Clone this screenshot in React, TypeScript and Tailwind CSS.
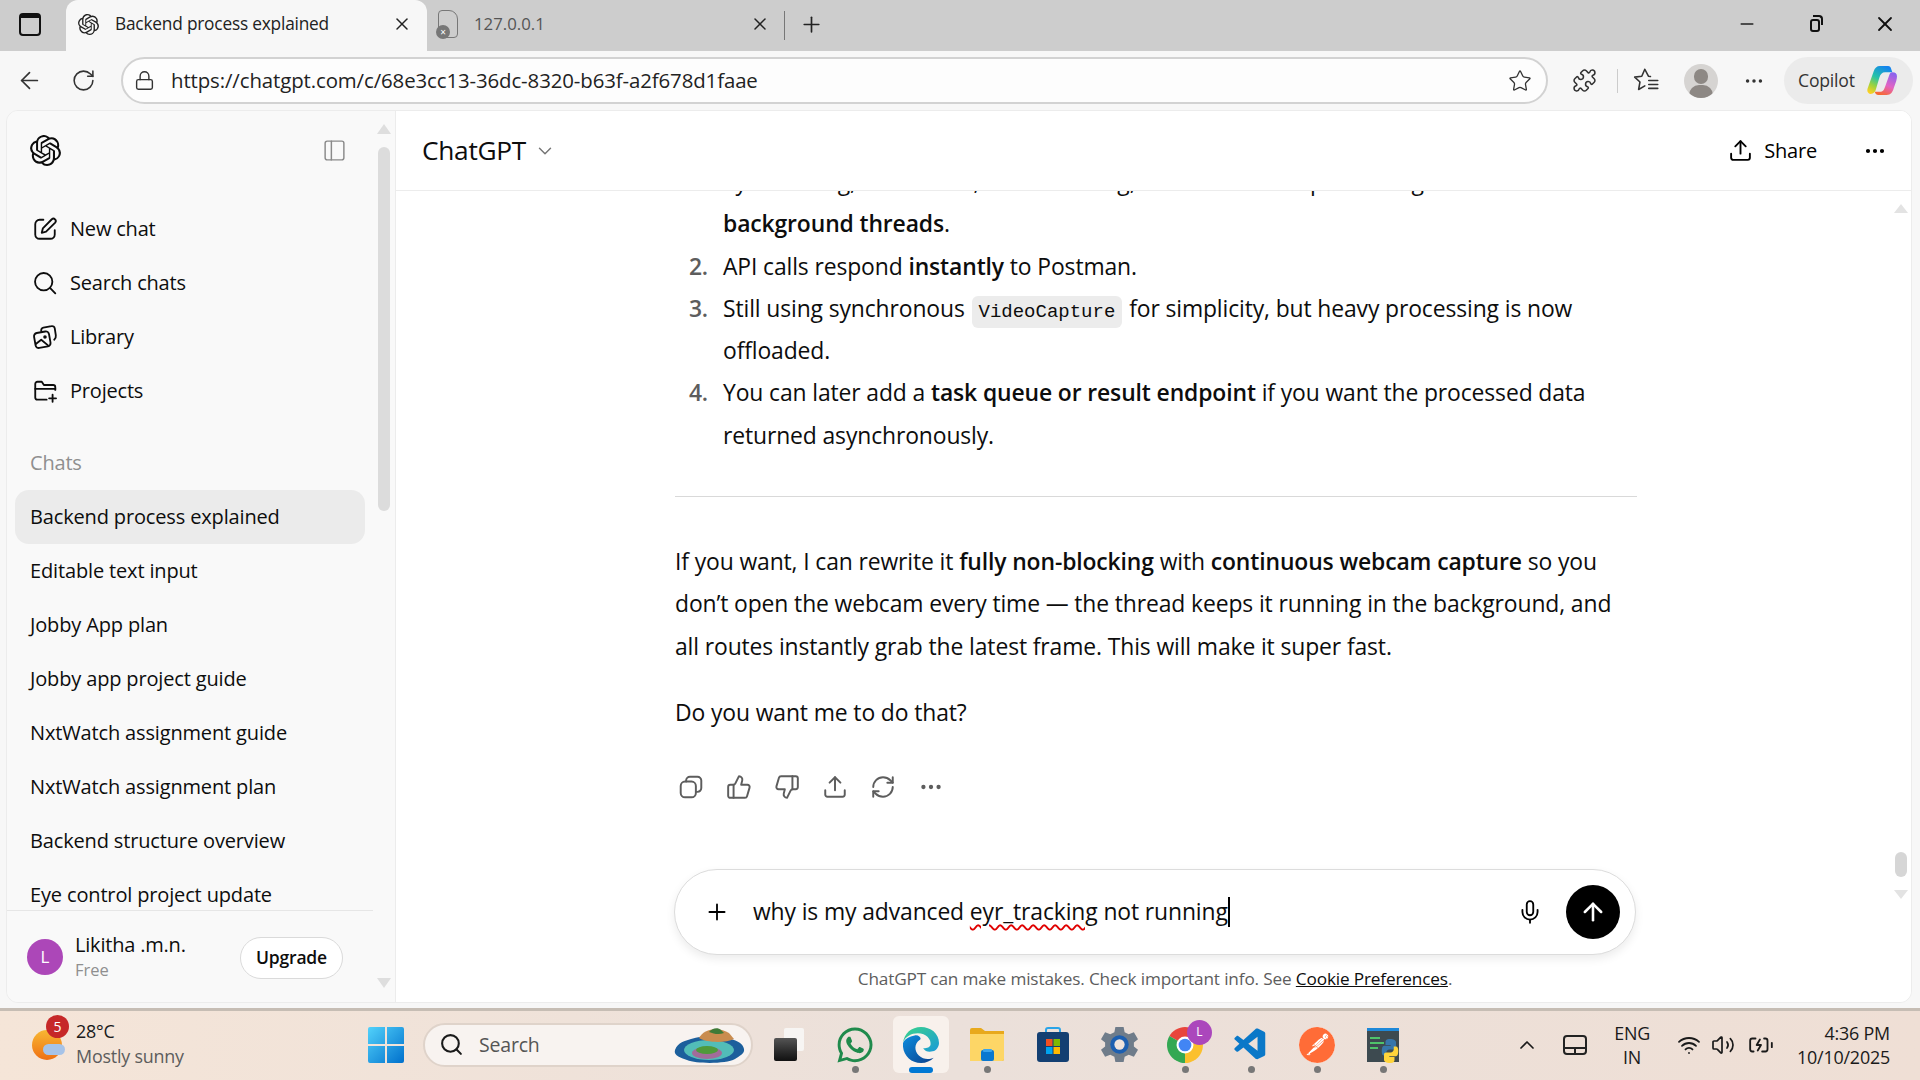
import type { ReactNode } from 'react';
import {
  ArrowLeft, ArrowUp, BatteryCharging, ChevronDown, ChevronUp, Ellipsis, Lock, Mic, Minus,
  PanelLeft, Plus, Puzzle, RefreshCw, RotateCw, Search, Star, ThumbsDown, ThumbsUp, Upload, Volume2, Wifi, X,
} from 'lucide-react';
import { SiOpenai, SiPostman } from 'react-icons/si';
import { FaWhatsapp } from 'react-icons/fa';
import { VscVscode } from 'react-icons/vsc';

const sideChats = [
  'Backend process explained',
  'Editable text input',
  'Jobby App plan',
  'Jobby app project guide',
  'NxtWatch assignment guide',
  'NxtWatch assignment plan',
  'Backend structure overview',
  'Eye control project update',
];

const NavSvg = ({ children }: { children: ReactNode }) => (
  <svg width="26" height="26" viewBox="0 0 24 24" fill="none" stroke="currentColor" strokeWidth="1.7" strokeLinecap="round" strokeLinejoin="round">
    {children}
  </svg>
);

const navItems = [
  {
    label: 'New chat',
    icon: (
      <NavSvg>
        <path d="M10.500 3.500H7a4 4 0 0 0-4 4V17a4 4 0 0 0 4 4h10a4 4 0 0 0 4-4v-4" />
        <path d="M18.300 3a2.200 2.200 0 0 1 3.100 3.100L13 14.500l-4 1 1-4z" />
      </NavSvg>
    ),
  },
  {
    label: 'Search chats',
    icon: (
      <NavSvg>
        <circle cx="10.800" cy="10.800" r="8" />
        <path d="M16.800 16.800l4.700 4.700" />
      </NavSvg>
    ),
  },
  {
    label: 'Library',
    icon: (
      <NavSvg>
        <path d="M8.500 6.500V5.800a2.500 2.500 0 0 1 2-2.400L18 2a2.500 2.500 0 0 1 3 2l1 6.500c.2 1.500-.3 3-1.500 4" />
        <rect x="2.500" y="7.500" width="14" height="14" rx="3" transform="rotate(-10 9.500 14.500)" />
        <path d="M3.500 18.500l5-4 6 5" />
        <circle cx="12" cy="12" r=".8" />
      </NavSvg>
    ),
  },
  {
    label: 'Projects',
    icon: (
      <NavSvg>
        <path d="M21.500 11V8.500a2 2 0 0 0-2-2H11L9 3.500H5a2 2 0 0 0-2 2V18a2 2 0 0 0 2 2h8.500" />
        <path d="M3 10h18.500" />
        <path d="M19 15.500v6.500M15.800 18.800h6.400" />
      </NavSvg>
    ),
  },
];

const TabBar = () => (
  <div className="h-[51px] bg-[#cdcdcd] flex items-end shrink-0 text-[#222]">
    <div className="w-[66px] h-full flex items-center pl-[19px] pb-[3px]">
      <div className="w-[22px] h-[23px] border-2 border-[#111] rounded-[4px] border-t-[5px]" />
    </div>
    <div className="w-[361px] h-[51px] bg-[#f7f7f7] rounded-t-[12px] flex items-center pl-[12px] pr-[15px] pb-[3px]">
      <SiOpenai size={21} className="text-[#222]" />
      <span className="ml-[16px] text-[17.300px] tracking-[-0.2px] flex-1">Backend process explained</span>
      <X size={20} strokeWidth={1.8} />
    </div>
    <div className="w-[357px] h-full flex items-center pl-[11px] pr-[14px] pb-[3px]">
      <div className="relative w-[20px] h-[28px] border-[1.5px] border-[#777] rounded-[4px] rounded-tr-[9px]">
        <div className="absolute -left-[3px] bottom-[-2px] w-[14px] h-[14px] rounded-full bg-[#777] text-white text-[10px] leading-[14px] text-center">×</div>
      </div>
      <span className="ml-[16px] text-[16.800px] text-[#555] flex-1">127.0.0.1</span>
      <X size={20} strokeWidth={1.8} />
    </div>
    <div className="w-px h-[29px] bg-[#777] mb-[11px]" />
    <div className="h-full flex items-center ml-[14px] pb-[3px]"><Plus size={25} strokeWidth={1.6} /></div>
    <div className="flex-1" />
    <div className="h-full flex items-center pr-[23px] gap-[48px] pb-[3px]">
      <Minus size={20} strokeWidth={1.8} />
      <div className="relative w-[20px] h-[20px] flex items-center justify-center">
        <div className="w-[10px] h-[13px] border-2 border-[#111] rounded-[3px] mt-[3px]" />
        <div className="absolute top-[1px] right-[2px] w-[10px] h-[10px] border-t-2 border-r-2 border-[#111] rounded-tr-[4px]" />
      </div>
      <X size={24} strokeWidth={1.8} className="text-[#111]" />
    </div>
  </div>
);

const CopilotLogo = () => (
  <svg width="33" height="31" viewBox="0 0 31 30">
    <defs>
      <linearGradient id="cpa" x1="0.7" y1="0" x2="0.2" y2="1">
        <stop offset="0" stopColor="#1484ee" /><stop offset="0.45" stopColor="#24c3a8" /><stop offset="0.75" stopColor="#9ed23c" /><stop offset="1" stopColor="#fbd022" />
      </linearGradient>
      <linearGradient id="cpb" x1="0.7" y1="0" x2="0.3" y2="1">
        <stop offset="0" stopColor="#8a63ee" /><stop offset="0.55" stopColor="#e263c4" /><stop offset="1" stopColor="#f8692f" />
      </linearGradient>
    </defs>
    <path d="M13 1h8c1.500 0 2.500 1 3 3l1 3h-7c-3 0-4.500 2-5.500 5L9 24c-.5 2-2 4-5 4-3-.5-3.500-3-3-5L7 6c1-3 3-5 6-5z" fill="url(#cpa)" />
    <path d="M25 7c3 0 4.500 1 4.500 4s-1 6-3 11c-1 4-3 7-7 7h-8c-2 0-3-1-3.500-3h5c3 0 4-2 5-5L22 10c.5-2 1.500-3 3-3z" fill="url(#cpb)" />
  </svg>
);

const FavoritesIcon = () => (
  <svg width="27" height="27" viewBox="0 0 24 24" fill="none" stroke="currentColor" strokeWidth="1.400" strokeLinejoin="round" strokeLinecap="round">
    <path d="M15.500 8.500l-1.800-.3L10.500 2 7.800 8.200 1.500 9l4.700 4.300L5 20l5.500-3.200" />
    <path d="M14 12h8M14 15.500h8M14 19h8" />
  </svg>
);

const CopyIcon = () => (
  <svg width="26" height="26" viewBox="0 0 24 24" fill="none" stroke="currentColor" strokeWidth="1.800" strokeLinejoin="round" strokeLinecap="round">
    <rect x="2.500" y="7" width="14" height="14.500" rx="4" />
    <path d="M7.500 7V6A3.500 3.500 0 0 1 11 2.500h7A3.500 3.500 0 0 1 21.500 6v7a3.500 3.500 0 0 1-3.500 3.500h-1.500" />
  </svg>
);

const Toolbar = () => (
  <div className="h-[59px] bg-[#f7f7f7] flex items-center shrink-0 text-[#333]">
    <div className="w-[121px] flex items-center pl-[16px] gap-[28px]">
      <ArrowLeft size={27} strokeWidth={1.5} />
      <RotateCw size={25} strokeWidth={1.5} />
    </div>
    <div className="w-[1427px] h-[47px] rounded-full border-2 border-[#d2d2d2] bg-[#fdfdfd] flex items-center pl-[11px] pr-[14px]">
      <Lock size={21} strokeWidth={1.6} />
      <span className="ml-[16px] text-[20.400px] tracking-[-0.1px] text-[#222] flex-1">https://chatgpt.com/c/68e3cc13-36dc-8320-b63f-a2f678d1faae</span>
      <Star size={24} strokeWidth={1.3} />
    </div>
    <div className="flex items-center ml-[24px]">
      <Puzzle size={25} strokeWidth={1.5} />
      <div className="w-px h-[24px] bg-[#ccc] ml-[20px]" />
      <span className="ml-[15px]"><FavoritesIcon /></span>
      <div className="relative ml-[24px] w-[34px] h-[34px] rounded-full bg-[#d6d4d2] overflow-hidden">
        <div className="absolute left-[10px] top-[5px] w-[14px] h-[15px] rounded-full bg-[#8d8884]" />
        <div className="absolute left-[5px] top-[21px] w-[24px] h-[20px] rounded-full bg-[#8d8884]" />
      </div>
      <Ellipsis size={22} strokeWidth={1.8} className="ml-[25px]" />
    </div>
    <div className="ml-[19px] w-[129px] h-[47px] rounded-full bg-[#ebebeb] flex items-center pl-[14px] gap-[11px]">
      <span className="text-[17.600px] tracking-[-0.2px] text-[#333]">Copilot</span>
      <CopilotLogo />
    </div>
  </div>
);

const Sidebar = () => (
  <aside className="w-[389px] shrink-0 flex bg-[#f9f9f9] border-r border-[#ececec] text-[#0d0d0d]">
    <div className="w-[366px] flex flex-col">
      <div className="h-[78px] flex items-center justify-between pl-[23px] pr-[26px] shrink-0">
        <SiOpenai size={31} />
        <PanelLeft size={25} strokeWidth={1.4} className="text-[#8a8a8a]" />
      </div>
      <div className="flex-1 overflow-hidden">
        <div className="pt-[13px]">
          {navItems.map((item) => (
            <div key={item.label} className="h-[54px] flex items-center pl-[25px] gap-[12px] text-[20px] tracking-[-0.2px]">
              {item.icon}
              <span>{item.label}</span>
            </div>
          ))}
        </div>
        <div className="h-[54px] mt-[18px] flex items-center pl-[23px] text-[20px] tracking-[-0.2px] text-[#8f8f8f]">Chats</div>
        <div className="px-[8px]">
          {sideChats.map((chat, i) => (
            <div
              key={chat}
              className={`h-[54px] rounded-[14px] flex items-center pl-[15px] text-[20px] tracking-[-0.15px] whitespace-nowrap ${i === 0 ? 'bg-[#ebebeb]' : ''}`}
            >
              {chat}
            </div>
          ))}
        </div>
      </div>
      <div className="h-[92px] border-t border-[#e6e6e6] shrink-0 flex items-center pl-[20px] pr-[30px]">
        <div className="w-[36px] h-[36px] rounded-full bg-[#ac47b8] text-white flex items-center justify-center text-[17px]">L</div>
        <div className="ml-[12px] flex-1">
          <div className="text-[20px] leading-[26px] tracking-[-0.2px]">Likitha .m.n.</div>
          <div className="text-[16.500px] leading-[24px] text-[#8f8f8f]">Free</div>
        </div>
        <div className="w-[103px] h-[42px] mt-[2px] rounded-full border border-[#dadada] bg-white flex items-center justify-center text-[17.500px] font-semibold tracking-[-0.2px]">Upgrade</div>
      </div>
    </div>
    <div className="flex-1 flex flex-col items-center relative pt-[13px] pb-[14px]">
      <div className="w-0 h-0 border-x-[7px] border-x-transparent border-b-[10px] border-b-[#dedede]" />
      <div className="w-[12px] h-[364px] mt-[13px] rounded-full bg-[#dcdcdc]" />
      <div className="flex-1" />
      <div className="w-0 h-0 border-x-[7px] border-x-transparent border-t-[10px] border-t-[#dedede]" />
    </div>
  </aside>
);

const Li = ({ n, children }: { n: number; children: ReactNode }) => (
  <li className="flex">
    <span className="w-[33px] text-right font-semibold text-[#5d5d5d] mr-[15px] shrink-0">{n}.</span>
    <div>{children}</div>
  </li>
);

const Chat = () => (
  <div className="flex-1 overflow-hidden">
    <div className="w-[962px] ml-[279px] mt-[-30px] text-[22.900px] leading-[42.300px] tracking-[-0.12px] text-[#0d0d0d]">
      <ol>
        <Li n={1}>
          Eye tracking, calibration, hand tracking, and screenshot processing all run in <b className="font-semibold">background threads</b>.
        </Li>
        <Li n={2}>API calls respond <b className="font-semibold">instantly</b> to Postman.</Li>
        <Li n={3}>
          Still using synchronous{' '}
          <code className="font-['Liberation_Mono',monospace] text-[19px] leading-none tracking-normal bg-[#ececec] rounded-[6px] px-[7px] py-[5px] mx-[1px]">VideoCapture</code>{' '}
          for simplicity, but heavy processing is now offloaded.
        </Li>
        <Li n={4}>
          You can later add a <b className="font-semibold">task queue or result endpoint</b> if you want the processed data returned asynchronously.
        </Li>
      </ol>
      <hr className="mt-[39px] mb-[44px] border-[#d9d9d9]" />
      <p>
        If you want, I can rewrite it <b className="font-semibold">fully non-blocking</b> with <b className="font-semibold">continuous webcam capture</b> so you don’t open the webcam every time — the thread keeps it running in the background, and all routes instantly grab the latest frame. This will make it super fast.
      </p>
      <p className="mt-[24px]">Do you want me to do that?</p>
      <div className="flex items-center gap-[22px] mt-[40px] ml-[3px] text-[#5d5d5d]">
        <CopyIcon />
        <ThumbsUp size={26} strokeWidth={1.8} />
        <ThumbsDown size={26} strokeWidth={1.8} />
        <Upload size={26} strokeWidth={1.8} />
        <RefreshCw size={26} strokeWidth={1.8} />
        <Ellipsis size={26} strokeWidth={2} />
      </div>
    </div>
  </div>
);

const Composer = () => (
  <div className="shrink-0 pl-[278px] pr-[275px]">
    <div className="h-[86px] rounded-[43px] border border-[#dcdcdc] bg-white shadow-[0_4px_10px_rgba(0,0,0,0.08)] flex items-center pl-[29px] pr-[15px]">
      <Plus size={26} strokeWidth={1.7} />
      <span className="ml-[23px] text-[22.900px] tracking-[-0.12px] text-[#0d0d0d] flex items-center">
        why is my advanced&nbsp;
        <span className="underline decoration-wavy decoration-[#e00000] decoration-[1.5px] underline-offset-[4px]">eyr_tracking</span>
        &nbsp;not running
        <span className="inline-block w-[2px] h-[30px] bg-black" />
      </span>
      <div className="flex-1" />
      <Mic size={26} strokeWidth={1.7} />
      <div className="ml-[23px] w-[54px] h-[54px] rounded-full bg-black text-white flex items-center justify-center">
        <ArrowUp size={28} strokeWidth={2.2} />
      </div>
    </div>
    <div className="h-[47px] flex items-center justify-center text-[17.200px] tracking-[-0.15px] text-[#5d5d5d]">
      ChatGPT can make mistakes. Check important info. See&nbsp;<span className="underline text-[#0d0d0d]">Cookie Preferences</span>.
    </div>
  </div>
);

const Main = () => (
  <main className="flex-1 flex flex-col bg-white min-w-0 relative">
    <header className="h-[80px] shrink-0 border-b border-[#ececec] flex items-center pl-[26px] pr-[24px] relative z-10 bg-white">
      <span className="text-[26.300px] tracking-[-0.3px] text-[#0d0d0d]">ChatGPT</span>
      <ChevronDown size={22} strokeWidth={1.6} className="ml-[8px] text-[#777]" />
      <div className="flex-1" />
      <Upload size={25} strokeWidth={1.8} />
      <span className="ml-[11px] text-[20px] font-medium tracking-[-0.2px]">Share</span>
      <Ellipsis size={24} strokeWidth={2.2} className="ml-[46px]" />
    </header>
    <Chat />
    <Composer />
    {/* scrollbar over the chat */}
    <div className="absolute right-[3px] top-[93px] w-0 h-0 border-x-[7px] border-x-transparent border-b-[9px] border-b-[#e3e3e3]" />
    <div className="absolute right-[4px] top-[741px] w-[12px] h-[25px] rounded-full bg-[#d6d6d6]" />
    <div className="absolute right-[3px] top-[779px] w-0 h-0 border-x-[7px] border-x-transparent border-t-[9px] border-t-[#e3e3e3]" />
  </main>
);

const TaskIcon = ({ children, dot, active }: { children: ReactNode; dot?: boolean; active?: boolean }) => (
  <div className="relative w-[66px] h-[57px] flex items-center justify-center">
    {active && <div className="absolute left-[5px] right-[5px] inset-y-0 rounded-[6px] bg-[#f8f1ec]" />}
    <div className="relative">{children}</div>
    {dot && <div className="absolute bottom-[0px] w-[7px] h-[7px] rounded-full bg-[#777]" />}
    {active && <div className="absolute bottom-[0px] w-[24px] h-[6px] rounded-full bg-[#0078d4]" />}
  </div>
);

const WindowsLogo = () => (
  <svg width="36" height="36" viewBox="0 0 36 36">
    <defs>
      <linearGradient id="win" x1="0" y1="0" x2="1" y2="1"><stop offset="0" stopColor="#52d2fb" /><stop offset="1" stopColor="#0070cc" /></linearGradient>
    </defs>
    <path d="M2 0h15v17H0V2a2 2 0 0 1 2-2zM19 0h15a2 2 0 0 1 2 2v15H19zM0 19h17v17H2a2 2 0 0 1-2-2zM19 19h17v15a2 2 0 0 1-2 2H19z" fill="url(#win)" />
  </svg>
);

const Island = () => (
  <svg width="72" height="38" viewBox="0 0 72 38">
    <path d="M2 24c3-8 10-9 16-11 12-4 30-4 40 0 6 2 12 4 13 10 1 5-5 7-9 10-9 5-38 5-48 1-5-2-14-4-12-10z" fill="#1c5f9c" />
    <ellipse cx="36" cy="24" rx="25" ry="10" fill="#52bdb8" />
    <ellipse cx="34" cy="27" rx="15" ry="6" fill="#a26c9a" />
    <ellipse cx="34" cy="24" rx="11" ry="4" fill="#4f9a3a" />
    <path d="M26 12c4-9 20-12 30-5l5 6c-8 4-27 4-35-1z" fill="#c98c4f" />
    <path d="M36 6c3-4 9-5 12-2l3 3c-5 2-10 1-15-1z" fill="#3e7a37" />
  </svg>
);

const EdgeLogo = () => (
  <svg width="36" height="36" viewBox="0 0 34 34">
    <defs>
      <linearGradient id="edgeA" x1="0" y1="0" x2="1" y2="1"><stop offset="0" stopColor="#3bd48a" /><stop offset="1" stopColor="#1a9ad8" /></linearGradient>
      <linearGradient id="edgeB" x1="0" y1="0" x2="1" y2="1"><stop offset="0" stopColor="#0c8ee0" /><stop offset="1" stopColor="#0a3f8c" /></linearGradient>
    </defs>
    <path d="M17 0C8 0 1 6 0 15c2-6 8-9 14-9 8 0 13 6 12 11-1 3-5 3-7 3 2 3 5 4 9 3 4-1 6-5 6-8C34 6 26 0 17 0z" fill="url(#edgeA)" />
    <path d="M0 15c-1 11 7 19 17 19 5 0 9-2 12-5-4 2-10 2-14-2-5-5-4-12 1-15 2-1-1-5-5-4C6 9 2 11 0 15z" fill="url(#edgeB)" />
  </svg>
);

const FolderIcon = () => (
  <svg width="36" height="33" viewBox="0 0 34 33">
    <path d="M0 2a2 2 0 0 1 2-2h9l4 3h19v28a2 2 0 0 1-2 2H0z" fill="#e8a91c" />
    <path d="M0 6h34v25a2 2 0 0 1-2 2H0z" fill="#fdd666" />
    <rect x="11" y="22" width="13" height="11" rx="2" fill="#0a78d0" />
    <rect x="13" y="21" width="9" height="3" rx="1" fill="#3ba4ec" />
  </svg>
);

const StoreIcon = () => (
  <svg width="34" height="36" viewBox="0 0 34 36">
    <path d="M10 6V3a2 2 0 0 1 2-2h10a2 2 0 0 1 2 2v3" fill="none" stroke="#2aa4e8" strokeWidth="2" />
    <rect x="1" y="5" width="32" height="30" rx="3" fill="#133f72" />
    <rect x="10" y="12" width="6.500" height="7" fill="#f25022" />
    <rect x="17.500" y="12" width="6.500" height="7" fill="#7fba00" />
    <rect x="10" y="20" width="6.500" height="7" fill="#00a4ef" />
    <rect x="17.500" y="20" width="6.500" height="7" fill="#ffb900" />
  </svg>
);

const GearIcon = () => (
  <svg width="37" height="37" viewBox="0 0 36 36">
    <path d="M14 1h8l1 5 4 2 5-2 4 7-4 3v4l4 3-4 7-5-2-4 2-1 5h-8l-1-5-4-2-5 2-4-7 4-3v-4L0 13l4-7 5 2 4-2z" fill="#6f7c8a" />
    <circle cx="18" cy="18" r="9" fill="#1d5fb0" />
    <circle cx="18" cy="18" r="5" fill="#efe3dc" />
  </svg>
);

const ChromeIcon = () => (
  <div className="relative">
    <svg width="36" height="36" viewBox="0 0 34 34">
      <path d="M17 17L2.300 8.500A17 17 0 0 1 31.700 8.500z" fill="#e8453c" />
      <path d="M17 17L31.700 8.500A17 17 0 0 1 17 34z" fill="#fbc02d" />
      <path d="M17 17L17 34A17 17 0 0 1 2.300 8.500z" fill="#34a853" />
      <circle cx="17" cy="17" r="8" fill="#fff" />
      <circle cx="17" cy="17" r="6" fill="#4285f4" />
    </svg>
    <div className="absolute -right-[9px] -top-[7px] w-[25px] h-[25px] rounded-full bg-[#ab47bc] text-white text-[12px] flex items-center justify-center">L</div>
  </div>
);

const PythonIcon = () => (
  <div className="relative w-[32px] h-[34px] bg-[#3d4a50] border-t-[3px] border-[#1e88d8]">
    <div className="mt-[6px] ml-[3px] w-[10px] h-[2px] bg-[#4fc36a]" />
    <div className="mt-[3px] ml-[3px] w-[14px] h-[2px] bg-[#4fc36a]" />
    <div className="mt-[3px] ml-[3px] w-[8px] h-[2px] bg-[#4fc36a]" />
    <svg className="absolute -right-[1px] top-[8px]" width="20" height="24" viewBox="0 0 22 32">
      <path d="M11 0c-5 0-6 2-6 4v4h7v1H3c-2 0-3 3-3 7s1 6 3 6h3v-4c0-2 2-4 4-4h6c2 0 3-1 3-3V4c0-2-3-4-8-4z" fill="#3776ab" />
      <path d="M11 32c5 0 6-2 6-4v-4h-7v-1h9c2 0 3-3 3-7s-1-6-3-6h-3v4c0 2-2 4-4 4H6c-2 0-3 1-3 3v7c0 2 3 4 8 4z" fill="#ffd43b" />
    </svg>
  </div>
);

const Taskbar = () => (
  <footer className="h-[72px] shrink-0 border-t-[3px] border-[#c6bdb4] pb-[2px] bg-gradient-to-r from-[#f5e5d8] via-[#ebe0da] to-[#efdfd5] flex items-center text-[#1a1a1a]">
    <div className="w-[368px] flex items-center pl-[32px] shrink-0">
      <div className="relative w-[34px] h-[36px]">
        <div className="absolute left-0 top-[3px] w-[30px] h-[30px] rounded-full bg-gradient-to-b from-[#f7b733] to-[#ee6f12]" />
        <div className="absolute left-[11px] top-[17px] w-[22px] h-[11px] rounded-full bg-[#a6c3e8]" />
        <div className="absolute left-[14px] -top-[12px] w-[23px] h-[23px] rounded-full bg-[#c62828] text-white text-[14px] flex items-center justify-center">5</div>
      </div>
      <div className="ml-[10px] -mt-[3px]">
        <div className="text-[17.900px] leading-[25px] tracking-[-0.2px]">28°C</div>
        <div className="text-[17.900px] leading-[24px] tracking-[-0.2px] text-[#5c5c5c]">Mostly sunny</div>
      </div>
    </div>
    <WindowsLogo />
    <div className="ml-[19px] w-[330px] h-[44px] rounded-full bg-[#f8f3f0] border-2 border-[#dfd3ca] flex items-center pl-[14px] pr-[6px]">
      <Search size={25} strokeWidth={2} />
      <span className="ml-[15px] text-[19.500px] tracking-[-0.2px] text-[#555] flex-1">Search</span>
      <Island />
    </div>
    <div className="flex items-center ml-[3px]">
      <TaskIcon>
        <div className="relative w-[30px] h-[33px]">
          <div className="absolute right-0 top-0 w-[20px] h-[23px] rounded-[2px] bg-[#f7f5f3]" />
          <div className="absolute left-0 bottom-0 w-[23px] h-[23px] rounded-[2px] bg-gradient-to-b from-[#555] to-[#111]" />
        </div>
      </TaskIcon>
      <TaskIcon dot><FaWhatsapp size={40} className="text-[#1f8a4c]" /></TaskIcon>
      <TaskIcon active><EdgeLogo /></TaskIcon>
      <TaskIcon dot><FolderIcon /></TaskIcon>
      <TaskIcon><StoreIcon /></TaskIcon>
      <TaskIcon><GearIcon /></TaskIcon>
      <TaskIcon dot><ChromeIcon /></TaskIcon>
      <TaskIcon dot><VscVscode size={38} className="text-[#0a78c8]" /></TaskIcon>
      <TaskIcon dot>
        <div className="w-[36px] h-[36px] rounded-full bg-[#ff6c37] flex items-center justify-center">
          <SiPostman size={36} className="text-[#ff6c37] bg-white rounded-full" />
        </div>
      </TaskIcon>
      <TaskIcon dot><PythonIcon /></TaskIcon>
    </div>
    <div className="flex-1" />
    <div className="flex items-center pr-[30px]">
      <ChevronUp size={24} strokeWidth={1.7} />
      <div className="ml-[24px] w-[24px] h-[20px] border-2 border-[#222] rounded-[4px] relative">
        <div className="absolute left-0 right-0 top-[10px] h-[2px] bg-[#222]" />
        <div className="absolute left-[9px] top-[10px] bottom-0 w-[2px] bg-[#222]" />
      </div>
      <div className="ml-[27px] text-center text-[17.900px] leading-[24px] tracking-[-0.2px]">ENG<br />IN</div>
      <Wifi size={24} strokeWidth={1.8} className="ml-[27px]" />
      <Volume2 size={24} strokeWidth={1.7} className="ml-[10px]" />
      <BatteryCharging size={26} strokeWidth={1.7} className="ml-[13px]" />
      <div className="ml-[23px] text-right text-[17.900px] leading-[24px] tracking-[-0.2px]">4:36 PM<br />10/10/2025</div>
    </div>
  </footer>
);

const App = () => (
  <div className="w-[1920px] h-[1080px] flex flex-col overflow-hidden bg-[#f7f7f7] font-['Open_Sans','Noto_Sans',sans-serif]">
    <TabBar />
    <Toolbar />
    <div className="flex-1 flex min-h-0 pl-[6px] pr-[8px] pb-[5px]">
      <div className="flex-1 flex min-w-0 rounded-[12px] overflow-hidden border border-[#ececec]">
        <Sidebar />
        <Main />
      </div>
    </div>
    <Taskbar />
  </div>
);

export default App;
